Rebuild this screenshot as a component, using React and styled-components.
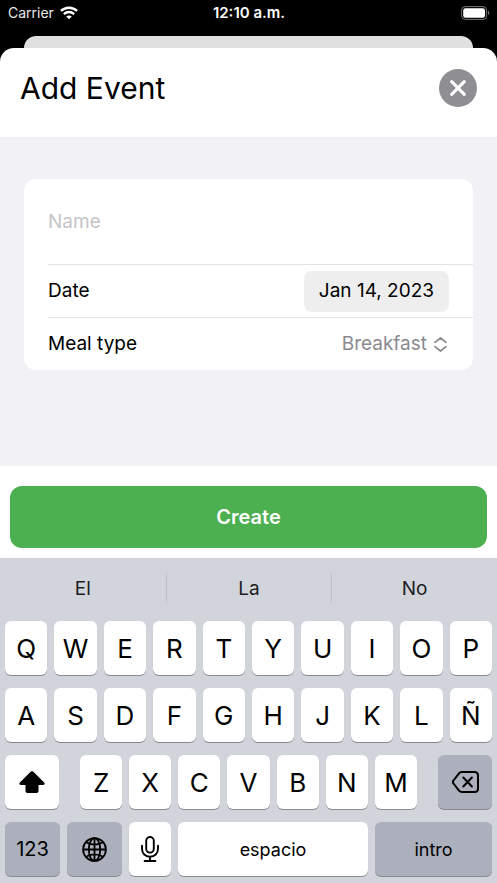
import React, { useState } from "react";
import styled, { createGlobalStyle } from "styled-components";

const GlobalStyle = createGlobalStyle`
  *, *::before, *::after { box-sizing: border-box; }
  body {
    margin: 0;
    background: #000;
    color: #000;
    font-family: Inter, "Liberation Sans", sans-serif;
  }
  button, input, select {
    margin: 0;
    padding: 0;
    border: 0;
    background: none;
    color: inherit;
    font: inherit;
  }
  svg { display: block; flex: none; }
`;

const Screen = styled.div`
  display: flex;
  flex-direction: column;
  min-height: 100vh;
`;

const StatusBar = styled.header`
  display: grid;
  grid-template-columns: 1fr auto 1fr;
  align-items: center;
  height: 36px;
  padding: 0 7px 10px 8px;
  color: #fff;
  font-size: 14px;
  line-height: 20px;
`;

const Carrier = styled.div`
  display: flex;
  align-items: center;
  gap: 6px;
  color: #e8e8e8;
`;

const Clock = styled.time`
  font-size: 15px;
  font-weight: 600;
`;

const BatterySlot = styled.div`
  display: flex;
  justify-content: flex-end;
`;

const PreviousSheet = styled.div`
  height: 12px;
  margin: 0 24px;
  border-radius: 12px 12px 0 0;
  background: #e0e0e0;
`;

const Sheet = styled.main`
  display: flex;
  flex: 1;
  flex-direction: column;
  overflow: hidden;
  border-radius: 14px 14px 0 0;
  background: #fff;
`;

const SheetHeader = styled.div`
  display: flex;
  align-items: center;
  justify-content: space-between;
  height: 89px;
  padding: 0 20px 10px;
`;

const Title = styled.h1`
  margin: 0;
  font-size: 30px;
  font-weight: 400;
  line-height: 40px;
`;

const CloseButton = styled.button`
  display: grid;
  place-items: center;
  width: 38px;
  height: 38px;
  border-radius: 50%;
  background: #8e8e93;
  color: #fff;
`;

const FormArea = styled.form`
  flex: 1;
  padding: 42px 24px;
  background: #f2f1f6;
`;

const FormCard = styled.div`
  padding-left: 24px;
  border-radius: 12px;
  background: #fff;
  font-size: 19px;
  line-height: 28px;
`;

const FormRow = styled.div`
  display: flex;
  align-items: center;
  justify-content: space-between;
  height: ${(p) => (p.$tall ? 86 : 53)}px;
  padding-right: 24px;
  border-bottom: 1px solid #e3e3e5;

  &:last-child {
    height: 52px;
    border-bottom: 0;
  }
`;

const NameInput = styled.input`
  width: 100%;
  outline: 0;

  &::placeholder { color: #c5c5c7; opacity: 1; }
`;

const DateButton = styled.button`
  height: 41px;
  padding: 0 15px;
  border-radius: 8px;
  background: #eeeeef;
`;

const Picker = styled.div`
  display: flex;
  flex: 1;
  align-items: center;
  gap: 7px;
  padding-right: 2px;
  color: #8a8a8e;
`;

const MealSelect = styled.select`
  flex: 1;
  appearance: none;
  outline: 0;
  text-align: right;
  text-align-last: right;
`;

const Footer = styled.div`
  padding: 20px 10px 10px;
`;

const CreateButton = styled.button`
  width: 100%;
  height: 62px;
  border-radius: 12px;
  background: #4caf50;
  color: #fff;
  font-size: 20px;
  font-weight: 600;
`;

const Keyboard = styled.section`
  padding-bottom: 7px;
  background: #d1d4db;
`;

const Suggestions = styled.div`
  display: grid;
  grid-template-columns: repeat(3, 1fr);
  padding: 15px 0 18px;
`;

const Suggestion = styled.button`
  height: 30px;
  border-left: 1px solid #bcbfc5;
  color: #1c1c1e;
  font-size: 19px;

  &:first-child { border-left: 0; }
`;

const Keys = styled.div`
  display: grid;
  gap: 13px;
  padding: 0 5px;
`;

const KeyRow = styled.div`
  display: grid;
  grid-template-columns: ${(p) => p.$columns};
  gap: 7px;
`;

const LetterGroup = styled.div`
  display: grid;
  grid-template-columns: repeat(7, 1fr);
  gap: 7px;
  padding: 0 14px;
`;

const keyTextSizes = { letter: 26, number: 20, word: 18 };

const Key = styled.button`
  display: grid;
  place-items: center;
  min-width: 0;
  height: 54px;
  border-radius: 6px;
  background: ${(p) => (p.$dark ? "#abb0bc" : "#fff")};
  box-shadow: 0 1px 0 #898b90;
  font-size: ${(p) => keyTextSizes[p.$text || "letter"]}px;
`;

const WifiIcon = () => (
  <svg width="18" height="14" viewBox="0 0 18 14" fill="none" stroke="#fff" aria-hidden="true">
    <path d="M.9 4.9C5.5.6 12.5.6 17.1 4.9" strokeWidth="2.5" />
    <path d="M3.9 8.1c2.9-2.8 7.3-2.8 10.2 0" strokeWidth="2.4" />
    <path d="M9 13.3 6.2 10.5c1.6-1.5 4-1.5 5.6 0z" fill="#fff" stroke="none" />
  </svg>
);

const BatteryIcon = () => (
  <svg width="29" height="14" viewBox="0 0 29 14" aria-hidden="true">
    <rect x=".6" y=".6" width="25" height="12.8" rx="3.6" fill="none" stroke="#777" />
    <rect x="2.2" y="2.2" width="21.8" height="9.6" rx="2.2" fill="#fff" />
    <path d="M27 4.8c1.6.6 1.6 3.8 0 4.4z" fill="#777" />
  </svg>
);

const CloseIcon = () => (
  <svg width="16" height="16" viewBox="0 0 16 16" fill="none" stroke="currentColor" strokeWidth="3.1" strokeLinecap="round" aria-hidden="true">
    <path d="m1.7 1.7 12.6 12.6M14.3 1.7 1.7 14.3" />
  </svg>
);

const UpDownIcon = () => (
  <svg width="13" height="15" viewBox="0 0 13 15" fill="none" stroke="currentColor" strokeWidth="1.7" strokeLinecap="round" strokeLinejoin="round" aria-hidden="true">
    <path d="M1 5.4 6.5 1 12 5.4M1 9.6 6.5 14 12 9.6" />
  </svg>
);

const ShiftIcon = () => (
  <svg width="26" height="22" viewBox="0 0 26 22" aria-hidden="true">
    <path d="M11.9.6c.7-.6 1.5-.6 2.2 0l11 11c1 1 .6 2.3-.8 2.3h-4.8v6.2c0 1.2-.6 1.8-1.8 1.8H8.3c-1.2 0-1.8-.6-1.8-1.8v-6.2H1.7c-1.4 0-1.8-1.3-.8-2.3z" />
  </svg>
);

const DeleteIcon = () => (
  <svg width="27" height="22" viewBox="0 0 27 22" fill="none" stroke="currentColor" strokeWidth="2" strokeLinecap="round" strokeLinejoin="round" aria-hidden="true">
    <path d="M10 1h12.5C24.7 1 26 2.3 26 4.5v13c0 2.2-1.3 3.5-3.5 3.5H10c-1.2 0-2-.3-2.8-1.1L1.5 12.500c-.8-.9-.8-2.100 0-3L7.200 2.100C8 1.300 8.800 1 10 1z" />
    <path d="m11.3 6.5 8.6 9M19.9 6.5l-8.6 9" />
  </svg>
);

const GlobeIcon = () => (
  <svg width="25" height="25" viewBox="0 0 25 25" fill="none" stroke="currentColor" strokeWidth="1.8" aria-hidden="true">
    <circle cx="12.5" cy="12.5" r="11.4" />
    <ellipse cx="12.5" cy="12.5" rx="5.7" ry="11.4" />
    <path d="M12.5 1v23M1 12.5h23M3.8 5c4.6 3.4 12.8 3.4 17.4 0M3.8 20c4.6-3.4 12.8-3.4 17.4 0" />
  </svg>
);

const MicIcon = () => (
  <svg width="18" height="26" viewBox="0 0 18 26" fill="none" stroke="currentColor" strokeWidth="1.9" strokeLinecap="round" aria-hidden="true">
    <rect x="5.2" y="1" width="7.6" height="15.6" rx="3.8" />
    <path d="M1 9.8v3c0 4.7 3.3 7.9 8 7.9s8-3.2 8-7.9v-3M9 20.7V25M3.6 25h10.8" />
  </svg>
);

const Letters = ({ text }) => [...text].map((letter) => <Key type="button" key={letter}>{letter}</Key>);

export default function App() {
  const [name, setName] = useState("");
  const [meal, setMeal] = useState("Breakfast");

  return (
    <>
      <GlobalStyle />
      <Screen>
        <StatusBar>
          <Carrier>Carrier <WifiIcon /></Carrier>
          <Clock>12:10 a.m.</Clock>
          <BatterySlot><BatteryIcon /></BatterySlot>
        </StatusBar>
        <PreviousSheet />
        <Sheet>
          <SheetHeader>
            <Title>Add Event</Title>
            <CloseButton type="button" aria-label="Close"><CloseIcon /></CloseButton>
          </SheetHeader>
          <FormArea id="event-form" onSubmit={(e) => e.preventDefault()}>
            <FormCard>
              <FormRow $tall>
                <NameInput aria-label="Name" placeholder="Name" value={name} onChange={(e) => setName(e.target.value)} />
              </FormRow>
              <FormRow>
                <label htmlFor="event-date">Date</label>
                <DateButton id="event-date" type="button">Jan 14, 2023</DateButton>
              </FormRow>
              <FormRow>
                <label htmlFor="meal-type">Meal type</label>
                <Picker>
                  <MealSelect id="meal-type" value={meal} onChange={(e) => setMeal(e.target.value)}>
                    <option>Breakfast</option>
                  </MealSelect>
                  <UpDownIcon />
                </Picker>
              </FormRow>
            </FormCard>
          </FormArea>
          <Footer>
            <CreateButton type="submit" form="event-form">Create</CreateButton>
          </Footer>
          <Keyboard aria-label="Keyboard">
            <Suggestions>
              <Suggestion type="button">El</Suggestion>
              <Suggestion type="button">La</Suggestion>
              <Suggestion type="button">No</Suggestion>
            </Suggestions>
            <Keys>
              <KeyRow $columns="repeat(10, 1fr)"><Letters text="QWERTYUIOP" /></KeyRow>
              <KeyRow $columns="repeat(10, 1fr)"><Letters text="ASDFGHJKLÑ" /></KeyRow>
              <KeyRow $columns="54fr 365fr 54fr">
                <Key type="button" aria-label="Shift"><ShiftIcon /></Key>
                <LetterGroup><Letters text="ZXCVBNM" /></LetterGroup>
                <Key type="button" $dark aria-label="Delete"><DeleteIcon /></Key>
              </KeyRow>
              <KeyRow $columns="55fr 55fr 42fr 190fr 117fr">
                <Key type="button" $dark $text="number">123</Key>
                <Key type="button" $dark aria-label="Next keyboard"><GlobeIcon /></Key>
                <Key type="button" aria-label="Dictate"><MicIcon /></Key>
                <Key type="button" $text="word">espacio</Key>
                <Key type="button" $dark $text="word">intro</Key>
              </KeyRow>
            </Keys>
          </Keyboard>
        </Sheet>
      </Screen>
    </>
  );
}
